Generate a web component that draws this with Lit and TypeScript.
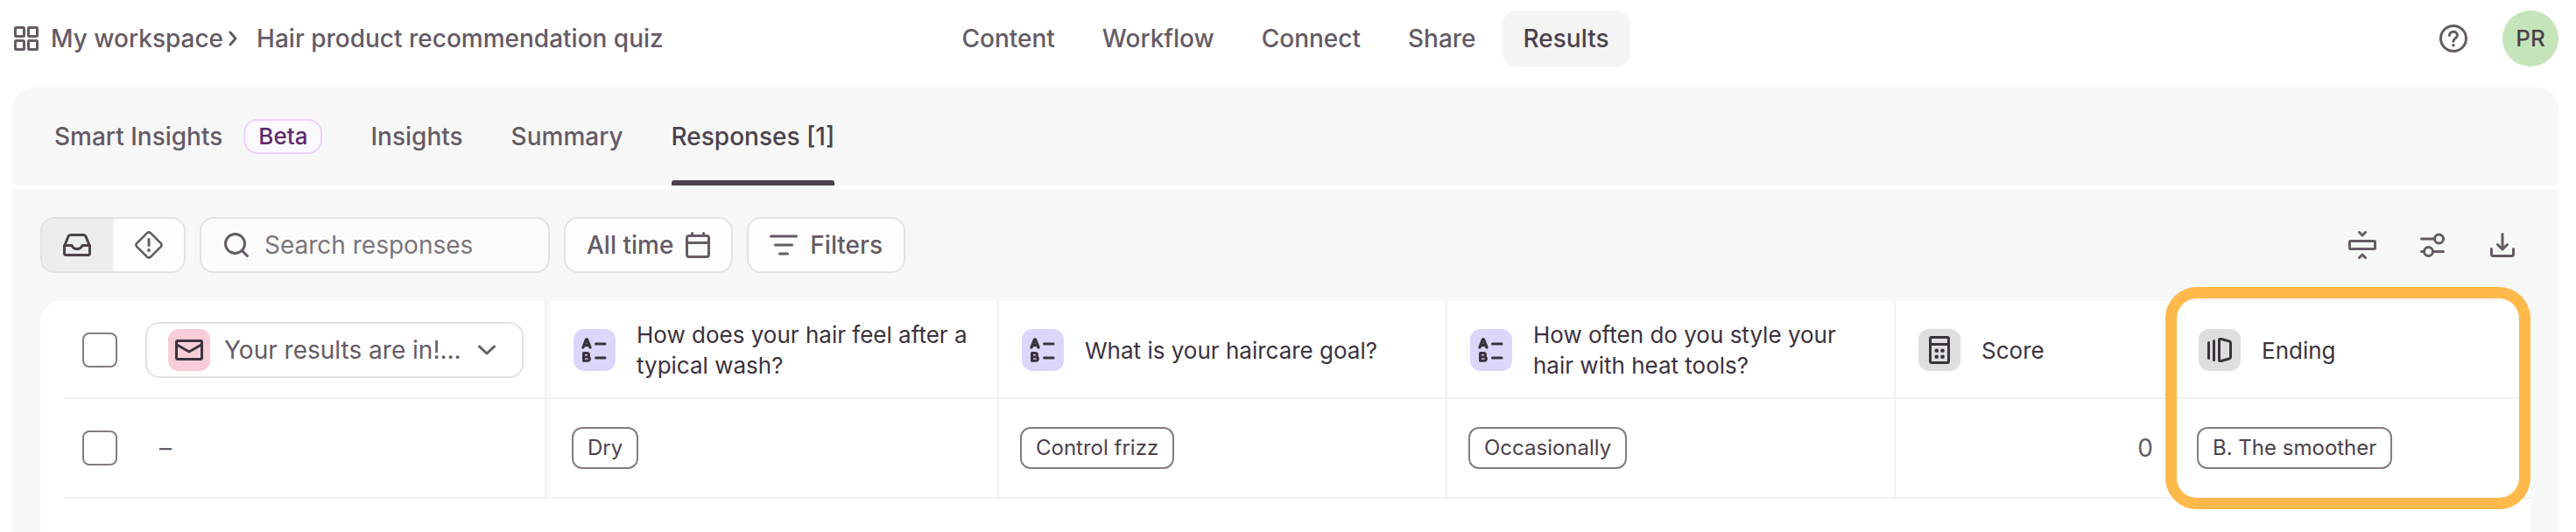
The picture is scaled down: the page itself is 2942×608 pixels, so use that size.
import { LitElement, html, css, svg } from "lit";
import { customElement } from "lit/decorators.js";

type Glyph = ReturnType<typeof svg>;

const icon = (name: string, width: number, height: number, body: Glyph) => html`
  <svg class="icon icon-${name}" width=${width} height=${height} viewBox="0 0 ${width} ${height}" fill="none"
    stroke="currentColor" stroke-width="3" stroke-linecap="round" stroke-linejoin="round" aria-hidden="true">${body}</svg>`;

const gridIcon = icon("grid", 28, 28, svg`
  <rect x="1.5" y="1.5" width="10" height="10" rx="1"/><rect x="16.5" y="1.5" width="10" height="10" rx="1"/>
  <rect x="1.5" y="16.5" width="10" height="10" rx="1"/><rect x="16.5" y="16.5" width="10" height="10" rx="1"/>`);
const crumbIcon = icon("crumb", 10, 18, svg`<path d="M2 2l6 7-6 7"/>`);
const helpIcon = icon("help", 32, 32, svg`
  <circle cx="16" cy="16" r="14.5"/>
  <path d="M11.5 12.5c0-2.6 2-4.2 4.5-4.2s4.5 1.6 4.5 4c0 3.2-4.5 3.4-4.5 7"/>
  <circle cx="16" cy="23.8" r="1.8" fill="currentColor" stroke="none"/>`);
const inboxIcon = icon("inbox", 32, 26, svg`
  <path d="M1.5 14.5L6 3.3Q6.8 1.5 8.5 1.5h15q1.7 0 2.5 1.8l4.5 11.2v8q0 2-2 2h-25q-2 0-2-2z"/>
  <path d="M1.5 13.5h8.5q1.5 4 6 4t6-4h8.5"/>`);
const alertIcon = icon("alert", 32, 32, svg`
  <path d="M14.2 2.2q1.8-1.5 3.6 0l12 12q1.5 1.8 0 3.6l-12 12q-1.8 1.5-3.6 0l-12-12q-1.5-1.8 0-3.6z" stroke-width="2.6"/>
  <path d="M16 9.5v7"/><circle cx="16" cy="22" r="1.9" fill="currentColor" stroke="none"/>`);
const searchIcon = icon("search", 28, 28, svg`<circle cx="12.5" cy="12.5" r="11"/><path d="M20.5 20.5l6 6"/>`);
const calendarIcon = icon("calendar", 28, 30, svg`
  <rect x="1.5" y="4.5" width="25" height="24" rx="2.5"/><path d="M1.5 12.5h25M7.5 1.5v3M20.5 1.5v3"/>`);
const filterIcon = icon("filter", 32, 24, svg`<path d="M1.5 2h29M6.5 12h19M11.5 22h9"/>`);
const rowHeightIcon = icon("row-height", 32, 32, svg`
  <rect x="1.5" y="11.5" width="29" height="9" rx="1"/><path d="M12.5 1.5L16 5l3.5-3.5M12.5 30.5L16 27l3.5 3.5"/>`);
const slidersIcon = icon("sliders", 28, 28, svg`
  <path d="M1.5 7h14.5"/><circle cx="21.5" cy="7" r="5"/><circle cx="9.5" cy="21.5" r="5"/><path d="M1.5 21.5h3M15 21.5h11.5"/>`);
const downloadIcon = icon("download", 28, 28, svg`
  <path d="M14 1.5v17M8.5 13.5l5.5 5.5 5.5-5.5M1.5 18.5v6q0 2 2 2h21q2 0 2-2v-6"/>`);
const mailIcon = icon("mail", 32, 24, svg`
  <rect x="1.5" y="1.5" width="29" height="21" rx="1.5"/><path d="M2 6l14 8L30 6"/>`);
const caretIcon = icon("caret", 20, 12, svg`<path d="M1.5 2l8.5 8 8.5-8"/>`);
const choiceIcon = icon("choice", 30, 30, svg`
  <path d="M2 12L5.5 3h1L10 12M3.5 9.5h5" stroke-width="3.4"/>
  <path d="M2.5 18.5h3.8q2.2 0 2.2 2.2t-2.2 2.2h-3.8zM2.5 23h4.5q2.4 0 2.4 2.1t-2.4 2.1h-4.5z"/>
  <path d="M16.5 8h10.5M16.5 24h10.5"/>`);
const scoreIcon = icon("score", 24, 32, svg`
  <rect x="1.5" y="1.5" width="21" height="29" rx="1.5"/><path d="M1.5 9.5h21"/>
  <g fill="currentColor" stroke="none"><circle cx="8.8" cy="16.7" r="2.3"/><circle cx="15.5" cy="16.7" r="2.3"/><circle cx="8.8" cy="23.7" r="2.3"/><circle cx="15.5" cy="23.7" r="2.3"/></g>`);
const endingIcon = icon("ending", 28, 28, svg`
  <path d="M1.5 5.5v18M7.5 3.5v22M13.5 2.5q0-1.5 1.5-1.2l10 2.7q1.5 .4 1.5 2v16q0 1.6-1.5 2l-10 2.7q-1.5 .3-1.5-1.2z"/>`);

const questions = [
  { title: "How does your hair feel after a typical wash?", answer: "Dry" },
  { title: "What is your haircare goal?", answer: "Control frizz" },
  { title: "How often do you style your hair with heat tools?", answer: "Occasionally" },
];

@customElement("app-root")
export class AppRoot extends LitElement {
  static styles = css`
    :host { display: block; min-height: 100vh; background: #fff; color: #655b65; font: 400 28px/36px Inter, "Noto Sans", sans-serif; }
    *, *::after { box-sizing: border-box; }
    a { color: inherit; text-decoration: none; }
    button, input { font: inherit; color: inherit; margin: 0; padding: 0; }
    button { display: flex; align-items: center; justify-content: center; background: none; border: 0; }
    .icon { display: block; flex: none; }
    .page { display: flex; flex-direction: column; min-height: 100vh; padding: 0 20px 0 14px; }

    .topbar { display: grid; grid-template-columns: 1fr auto 1fr; align-items: center; height: 100px; padding-bottom: 12px; font-weight: 500; }
    .crumbs { display: flex; align-items: center; padding-left: 2px; }
    .home { display: flex; align-items: center; gap: 14px; }
    .icon-crumb { margin: 0 22px 0 6px; }
    .nav { display: flex; gap: 6px; }
    .nav a { padding: 14px 24px; border-radius: 16px; }
    .nav .current { background: #f4f4f4; color: #4c414c; }
    .account { display: flex; justify-content: flex-end; align-items: center; gap: 40px; }
    .avatar { width: 64px; height: 64px; border-radius: 50%; background: #c5e4ba; color: #4c414c; font-size: 26px; }

    .tabs { display: flex; gap: 55px; height: 112px; padding: 0 48px; border-radius: 24px 24px 0 0; background: #f7f7f7; font-weight: 500; }
    .tabs a { display: flex; align-items: center; gap: 24px; }
    .tabs .current { position: relative; color: #4c414c; }
    .tabs .current::after { content: ""; position: absolute; left: 0; right: 0; bottom: 0; height: 6px; border-radius: 3px 3px 0 0; background: #4c414c; }
    .beta { padding: 0 15px; border: 2px solid #edd0fb; border-radius: 16px; background: #fbf8fe; color: #5b2a6b; font-size: 26px; }

    .panel { flex: 1; display: flex; flex-direction: column; margin-top: 4px; padding: 32px 32px 0; background: #f7f7f7; }
    .toolbar { display: flex; align-items: center; gap: 16px; }
    .segment, .search, .pick, .box { height: 64px; border: 2px solid #e3e2e3; border-radius: 16px; background: #fdfdfd; }
    .segment { display: flex; width: 166px; overflow: hidden; }
    .segment button { flex: 1; }
    .segment .on { background: #ededef; color: #4c414c; border-right: 2px solid #f1f1f1; }
    .search { display: flex; align-items: center; gap: 18px; width: 400px; padding: 0 26px; background: #fbfbfb; }
    .search input { flex: 1; min-width: 0; border: 0; outline: 0; background: none; }
    .search input::placeholder { color: #7b757b; opacity: 1; }
    .pick { gap: 14px; padding: 0 24px; font-weight: 500; }
    .tools { display: flex; gap: 48px; margin-left: auto; padding-right: 16px; }
    .tools button { width: 32px; height: 32px; }

    .card { flex: 1; margin-top: 32px; padding-left: 28px; border-radius: 24px 24px 0 0; background: #fff; }
    table { width: 100%; table-layout: fixed; border-collapse: separate; border-spacing: 0; }
    .c-main { width: 555px; } .c-question { width: 512px; } .c-score { width: 320px; }
    th, td { padding: 0 24px; border: solid #f0f0f0; border-width: 0 2px 2px 0; text-align: left; font-weight: 400; vertical-align: middle; }
    th { height: 112px; padding: 2px 26px 0; color: #3c323e; font-size: 26px; line-height: 35px; }
    td { height: 114px; }
    th:last-child, td:last-child { border-right: 0; }
    .main { padding-left: 20px; padding-right: 26px; border-right: 5px solid #f7f7f7; box-shadow: inset -2px 0 #f0f0f0; }
    .head, .lead { display: flex; align-items: center; }
    .head { gap: 24px; }
    .lead { gap: 32px; color: #655b65; font-size: 28px; line-height: 36px; }
    .lead span { padding-left: 16px; }
    input[type="checkbox"] { appearance: none; flex: none; width: 40px; height: 40px; border: 2px solid #857c85; border-radius: 8px; background: #fff; }
    .box { flex: 1; justify-content: flex-start; gap: 16px; padding: 0 30px 0 24px; background: #fff; }
    .icon-caret { margin-left: auto; }
    .tile { display: flex; flex: none; align-items: center; justify-content: center; width: 48px; height: 48px; border-radius: 12px; color: #3c323e; }
    .pink { background: #f8cdd8; } .violet { background: #ddd6fa; } .gray { background: #dfdde0; }
    .chip { display: inline-block; padding: 6px 16px; border: 2px solid #857c85; border-radius: 12px; color: #4c414c; font-size: 24px; line-height: 32px; vertical-align: middle; }
    .total { text-align: right; }
    .ending { position: relative; }
    .ending::after { content: ""; position: absolute; top: -16px; left: -12px; right: 0; height: 254px; border: 13px solid #ffb84a; border-radius: 36px; pointer-events: none; }
  `;

  render() {
    return html`
      <div class="page">
        <header class="topbar">
          <div class="crumbs">
            <a class="home" href="#workspace">${gridIcon}<span>My workspace</span></a>${crumbIcon}
            <a href="#form">Hair product recommendation quiz</a>
          </div>
          <nav class="nav">
            <a href="#content">Content</a><a href="#workflow">Workflow</a><a href="#connect">Connect</a>
            <a href="#share">Share</a><a class="current" href="#results" aria-current="page">Results</a>
          </nav>
          <div class="account">
            <button aria-label="Help">${helpIcon}</button>
            <button class="avatar">PR</button>
          </div>
        </header>
        <nav class="tabs">
          <a href="#smart">Smart Insights<span class="beta">Beta</span></a>
          <a href="#insights">Insights</a>
          <a href="#summary">Summary</a>
          <a class="current" href="#responses" aria-current="page">Responses [1]</a>
        </nav>
        <main class="panel">
          <div class="toolbar">
            <div class="segment">
              <button class="on" aria-label="Inbox">${inboxIcon}</button>
              <button aria-label="Flagged">${alertIcon}</button>
            </div>
            <label class="search">${searchIcon}<input type="text" aria-label="Search responses" placeholder="Search responses"></label>
            <button class="pick">All time${calendarIcon}</button>
            <button class="pick">${filterIcon}Filters</button>
            <div class="tools">
              <button aria-label="Row height">${rowHeightIcon}</button>
              <button aria-label="Columns">${slidersIcon}</button>
              <button aria-label="Download">${downloadIcon}</button>
            </div>
          </div>
          <div class="card">
            <table>
              <colgroup><col class="c-main">${questions.map(() => html`<col class="c-question">`)}<col class="c-score"><col></colgroup>
              <thead><tr>
                <th class="main"><div class="lead">
                  <input type="checkbox" aria-label="Select all responses">
                  <button class="box" aria-haspopup="listbox"><i class="tile pink">${mailIcon}</i>Your results are in!...${caretIcon}</button>
                </div></th>
                ${questions.map((q) => html`<th><div class="head"><i class="tile violet">${choiceIcon}</i>${q.title}</div></th>`)}
                <th><div class="head"><i class="tile gray">${scoreIcon}</i>Score</div></th>
                <th class="ending"><div class="head"><i class="tile gray">${endingIcon}</i>Ending</div></th>
              </tr></thead>
              <tbody><tr>
                <td class="main"><div class="lead"><input type="checkbox" aria-label="Select response"><span>–</span></div></td>
                ${questions.map((q) => html`<td><span class="chip">${q.answer}</span></td>`)}
                <td class="total">0</td>
                <td><span class="chip">B. The smoother</span></td>
              </tr></tbody>
            </table>
          </div>
        </main>
      </div>`;
  }
}
